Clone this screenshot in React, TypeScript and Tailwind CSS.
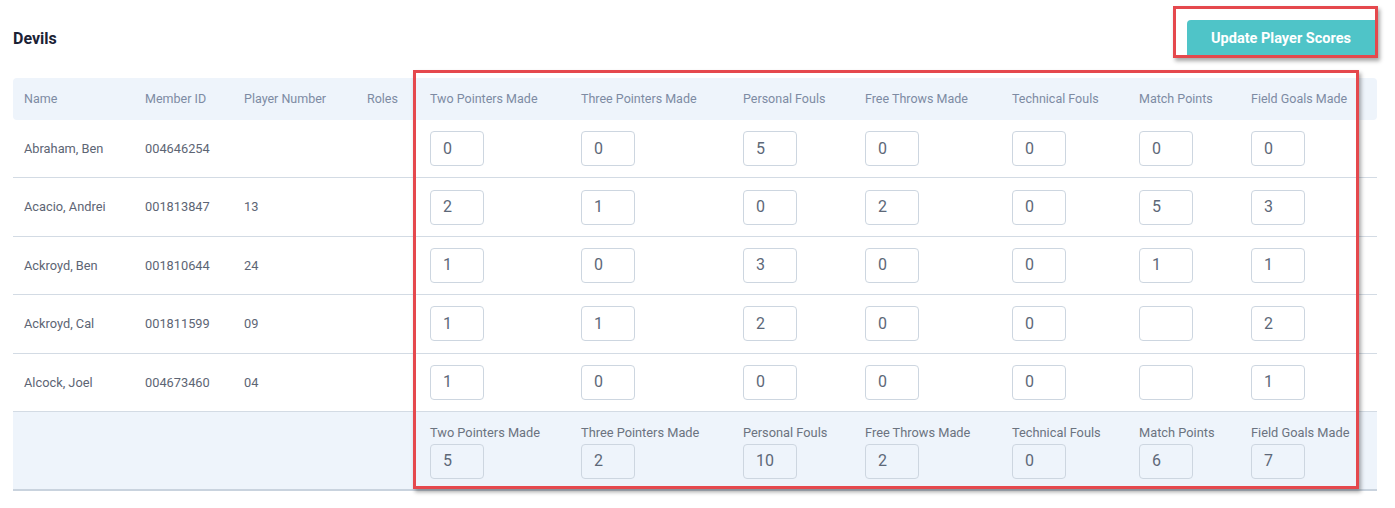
const cols = "grid grid-cols-[121px_99px_123px_63px_151px_162px_122px_147px_127px_112px_137px]";

const statCols = [
  "Two Pointers Made",
  "Three Pointers Made",
  "Personal Fouls",
  "Free Throws Made",
  "Technical Fouls",
  "Match Points",
  "Field Goals Made",
];

const players = [
  { name: "Abraham, Ben", id: "004646254", num: "", stats: ["0", "0", "5", "0", "0", "0", "0"] },
  { name: "Acacio, Andrei", id: "001813847", num: "13", stats: ["2", "1", "0", "2", "0", "5", "3"] },
  { name: "Ackroyd, Ben", id: "001810644", num: "24", stats: ["1", "0", "3", "0", "0", "1", "1"] },
  { name: "Ackroyd, Cal", id: "001811599", num: "09", stats: ["1", "1", "2", "0", "0", "", "2"] },
  { name: "Alcock, Joel", id: "004673460", num: "04", stats: ["1", "0", "0", "0", "0", "", "1"] },
];

const totals = ["5", "2", "10", "2", "0", "6", "7"];

function ScoreBox({ value, total }: { value: string; total?: boolean }) {
  return (
    <div
      className={`w-[54px] h-[35px] rounded-[4px] border border-[#cdd6e0] flex items-center pl-[12px] text-[16px] text-[#5d6878] ${
        total ? "bg-[#eef4fb]" : "bg-white"
      }`}
    >
      {value}
    </div>
  );
}

export default function App() {
  return (
    <main className="relative w-[1395px] h-[508px] bg-white overflow-hidden font-['Roboto',sans-serif]">
      <div className="flex items-start justify-between pl-[13px] pr-[20px] h-[57px]">
        <h1 className="pt-[28px] text-[16px] leading-[22px] font-bold text-[#1b2235]">Devils</h1>
        <button className="mt-[20px] w-[188px] h-[37px] rounded-tl-[4px] bg-[#4fc4c8] text-white text-[14.5px] font-bold">
          Update Player Scores
        </button>
      </div>

      <div className="ml-[13px] mt-[21px] w-[1364px]">
        {/* header */}
        <div className={`${cols} h-[42px] items-center bg-[#eef4fb] rounded-[4px] text-[12.5px] text-[#7d8ba3]`}>
          <div className="pl-[11px]">Name</div>
          <div className="pl-[11px]">Member ID</div>
          <div className="pl-[11px]">Player Number</div>
          <div className="pl-[11px]">Roles</div>
          {statCols.map((c) => (
            <div key={c} className="pl-[11px]">{c}</div>
          ))}
        </div>

        {/* rows */}
        {players.map((p) => (
          <div
            key={p.name}
            className={`${cols} h-[58.4px] items-center border-b border-[#d3dbe4] text-[12.8px] text-[#5d6574]`}
          >
            <div className="pl-[11px]">{p.name}</div>
            <div className="pl-[11px]">{p.id}</div>
            <div className="pl-[11px]">{p.num}</div>
            <div className="pl-[11px]"></div>
            {p.stats.map((s, j) => (
              <div key={j} className="pl-[11px]">
                <ScoreBox value={s} />
              </div>
            ))}
          </div>
        ))}

        {/* totals */}
        <div className={`${cols} h-[79px] bg-[#eef4fb] border-b-2 border-[#c9d3de] pt-[13px]`}>
          <div></div>
          <div></div>
          <div></div>
          <div></div>
          {statCols.map((c, j) => (
            <div key={c} className="pl-[11px]">
              <div className="text-[12.8px] leading-[16px] text-[#6b7380] mb-[3px]">{c}</div>
              <ScoreBox value={totals[j]} total />
            </div>
          ))}
        </div>
      </div>

      {/* annotation boxes */}
      <div className="absolute left-[413px] top-[70px] w-[946px] h-[419px] border-[3px] border-[#e5484d] shadow-[2px_3px_4px_rgba(0,0,0,0.35)]" />
      <div className="absolute left-[1173px] top-[6px] w-[205px] h-[52px] border-[3px] border-[#e5484d] shadow-[2px_3px_4px_rgba(0,0,0,0.35)]" />
    </main>
  );
}
